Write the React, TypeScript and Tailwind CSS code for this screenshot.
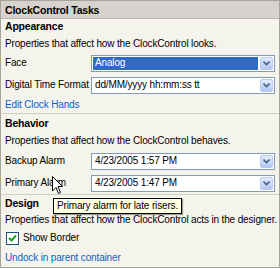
import React from 'react';

const font = { fontFamily: '"Liberation Sans", Arial, sans-serif' };

const Arrow: React.FC = () => (
  <div className="w-[13px] h-[13px] border border-[#b9cbf5] bg-gradient-to-b from-[#e3ecfd] to-[#b4c8f6] rounded-[2px] flex items-center justify-center">
    <svg width="7" height="5" viewBox="0 0 7 5">
      <path d="M0.5 0.5 L3.5 3.5 L6.5 0.5" fill="none" stroke="#4d6185" strokeWidth="1.6" />
    </svg>
  </div>
);

const Combo: React.FC<{ value: string; selected?: boolean }> = ({ value, selected }) => (
  <div className="w-[184px] h-[17px] border border-[#7f9db9] bg-white flex items-center p-px">
    <div className={`flex-1 h-full flex items-center pl-[2px] ${selected ? 'bg-[#316ac5] text-white' : 'text-black'}`}>{value}</div>
    <div className="ml-[2px]"><Arrow /></div>
  </div>
);

const Row: React.FC<{ label: string; children: React.ReactNode }> = ({ label, children }) => (
  <div className="flex items-center h-[22px]">
    <div className="w-[86px] shrink-0 whitespace-nowrap">{label}</div>
    {children}
  </div>
);

const Heading: React.FC<{ h: string; children: React.ReactNode }> = ({ h, children }) => (
  <div className={`${h} flex items-center font-bold text-[10.5px] tracking-[-0.2px]`}>{children}</div>
);

const App: React.FC = () => {
  return (
    <div className="w-[280px] h-[268px] bg-[#f5f4ec] border border-[#a5a49d] text-[10px] tracking-[-0.15px] leading-[12px] text-black overflow-hidden relative whitespace-nowrap" style={font}>
      <div className="h-[18px] bg-[#d6d3ce] border-b border-[#b8b5ae] font-bold text-[10.5px] tracking-[-0.2px] px-[4px] flex items-center">ClockControl Tasks</div>

      <div className="px-[4px]">
        <Heading h="h-[14px]">Appearance</Heading>
        <div className="h-[19px] pt-[3px] flex items-center">Properties that affect how the ClockControl looks.</div>
        <Row label="Face"><Combo value="Analog" selected /></Row>
        <Row label="Digital Time Format"><Combo value="dd/MM/yyyy hh:mm:ss tt" /></Row>
        <div className="h-[17px] flex items-center text-[#0b5fcb]">Edit Clock Hands</div>
      </div>
      <div className="border-t border-[#cfcdc4]" />

      <div className="px-[4px]">
        <Heading h="h-[18px]">Behavior</Heading>
        <div className="h-[18px] flex items-center">Properties that affect how the ClockControl behaves.</div>
        <Row label="Backup Alarm"><Combo value="4/23/2005 1:57 PM" /></Row>
        <Row label="Primary Alarm"><Combo value="4/23/2005 1:47 PM" /></Row>
      </div>
      <div className="border-t border-[#cfcdc4]" />

      <div className="px-[4px]">
        <Heading h="h-[16px]">Design</Heading>
        <div className="h-[18px] flex items-center">Properties that affect how the ClockControl acts in the designer.</div>
        <div className="flex items-center h-[18px] gap-[4px] pl-[1px]">
          <div className="w-[13px] h-[13px] border border-[#1c5180] bg-white flex items-center justify-center">
            <svg width="9" height="9" viewBox="0 0 9 9">
              <path d="M1 4 L3.5 6.5 L8 1.5" fill="none" stroke="#21a121" strokeWidth="2" />
            </svg>
          </div>
          <span>Show Border</span>
        </div>
        <div className="h-[21px] flex items-center text-[#0b5fcb]">Undock in parent container</div>
      </div>

      <div className="absolute left-[52px] top-[197px] border border-black bg-[#ffffe1] px-[3px] h-[16px] flex items-center shadow-[1px_1px_1px_rgba(0,0,0,0.35)]">Primary alarm for late risers.</div>
      <svg className="absolute left-[51px] top-[175px]" width="12" height="19" viewBox="0 0 12 19">
        <path d="M0.5 0.5 L0.5 15 L4 11.5 L6.5 17.5 L8.5 16.5 L6 10.5 L10.5 10.5 Z" fill="white" stroke="black" strokeWidth="1" />
      </svg>
    </div>
  );
};

export default App;
